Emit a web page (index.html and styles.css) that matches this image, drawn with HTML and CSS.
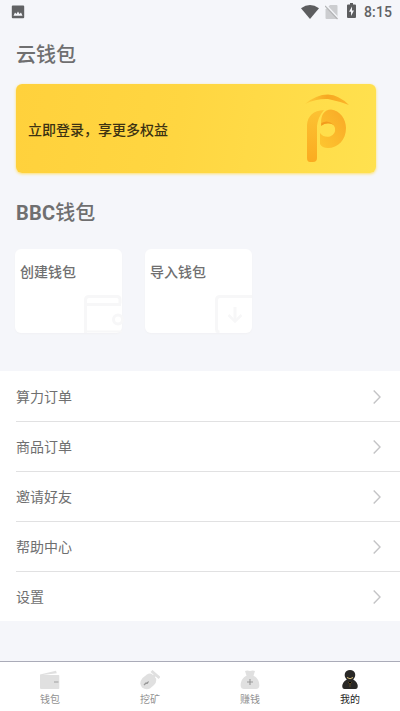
FILE: index.html
```html
<!DOCTYPE html>
<html lang="zh-CN">
<head>
<meta charset="utf-8">
<title>我的</title>
<link rel="stylesheet" href="styles.css">
</head>
<body>
<div class="app">
  <header class="status">
    <svg class="status-photo" width="14" height="14" viewBox="0 0 14 14"><path fill="#616264" fill-rule="evenodd" d="M1.800.500h10.400q1 0 1 1v10.800q0 1-1 1H1.800q-1 0-1-1V1.500q0-1 1-1zM2.500 10.800h9L10 7.500 8.500 9 7 6.500 5.500 9 4 7.500z"/></svg>
    <div class="status-right">
      <svg width="18" height="16" viewBox="0 0 18 16"><path fill="#5c5d5f" d="M0 4.200Q9-2 18 4.200L9 15z"/></svg>
      <svg class="sim" width="13" height="16" viewBox="0 0 13 16"><path fill="#cccdd0" d="M5 1h6.500q1 0 1 1v12q0 1-1 1h-10q-1 0-1-1V5.500z"/><path stroke="#f5f6fa" stroke-width="1.600" d="M1 1l12 13"/><path stroke="#b4b5b7" stroke-width="1.200" d="M0 2l12.500 13"/></svg>
      <svg class="battery" width="9" height="16" viewBox="0 0 9 16"><path fill="#5c5d5f" d="M3 0h3v1.500h2q1 0 1 1V14q0 1-1 1H1q-1 0-1-1V2.500q0-1 1-1h2z"/><path fill="#f5f6fa" d="M5 3.500L2 8.800h2V13l3-5.500H5z"/></svg>
      <span class="clock">8:15</span>
    </div>
  </header>
  <main>
    <h1 class="title">云钱包</h1>
    <section class="banner">
      <span>立即登录，享更多权益</span>
      <svg width="48" height="72" viewBox="0 0 48 72">
        <defs>
          <linearGradient id="arc"><stop offset="0" stop-color="#fdd03c"/><stop offset=".5" stop-color="#f7a821"/><stop offset="1" stop-color="#fbb52a"/></linearGradient>
          <linearGradient id="stem" x2="0" y2="1"><stop offset="0" stop-color="#fcc233"/><stop offset="1" stop-color="#fbab20"/></linearGradient>
          <linearGradient id="bowl" x1="0" y1="1" x2="1" y2="0"><stop offset="0" stop-color="#fdc630"/><stop offset="1" stop-color="#f9a826"/></linearGradient>
        </defs>
        <path fill="url(#arc)" d="M2 11Q13 1.500 25 1.500Q36 2 46 12Q35 8 25 6Q13 5.500 2 11z"/>
        <path fill="url(#stem)" d="M4 32Q5 18 21 17Q15 24 14 33V65q0 4-4 4H7q-3 0-3-4z"/>
        <path fill="url(#bowl)" d="M18 30Q18 17 28 16.500C37 17.500 43 26 43 35C43 47 35 55 25 55Q19 55 17 51V40Q21 45 27 43.500Q33 41 32 35Q30 28 18 32z"/>
        <path fill="#f39b1d" d="M18.500 30Q25 26 31 32Q24 28 18 33z"/>
      </svg>
    </section>
    <h2 class="title title-bbc"><b>BBC</b>钱包</h2>
    <section class="wallets">
      <div class="wallet">创建钱包
        <svg width="40" height="38" viewBox="0 0 40 38" fill="none" stroke="#f7f7f8" stroke-width="3"><path d="M1.500 38V5q0-3.500 3.500-3.500h28q3 0 3 3v4M2 9.500h35"/><path stroke-width="2" d="M1.500 36.500H38"/><circle cx="34" cy="24.500" r="4.500"/></svg>
      </div>
      <div class="wallet">导入钱包
        <svg width="40" height="38" viewBox="0 0 40 38" fill="none" stroke="#f7f7f8" stroke-width="3"><path d="M38 1.500H6Q2.500 1.500 2.500 5v29q0 3 3 3M21 12v14"/><path stroke-width="2.500" d="M14.500 20l6.500 6.500 6.500-6.500"/></svg>
      </div>
    </section>
    <nav class="list">
      <a class="row">算力订单<svg class="chevron" viewBox="0 0 8 14"><path d="M.7.500L7 7 .7 13.500"/></svg></a>
      <a class="row">商品订单<svg class="chevron" viewBox="0 0 8 14"><path d="M.7.500L7 7 .7 13.500"/></svg></a>
      <a class="row">邀请好友<svg class="chevron" viewBox="0 0 8 14"><path d="M.7.500L7 7 .7 13.500"/></svg></a>
      <a class="row">帮助中心<svg class="chevron" viewBox="0 0 8 14"><path d="M.7.500L7 7 .7 13.500"/></svg></a>
      <a class="row">设置<svg class="chevron" viewBox="0 0 8 14"><path d="M.7.500L7 7 .7 13.500"/></svg></a>
    </nav>
  </main>
  <footer class="tabs">
    <a class="tab"><svg width="20" height="20" viewBox="0 0 20 20"><path fill="#e0e0e0" d="M0 4.500L16 .700 16.800 3.200 3 5H18.500q.8 0 .8.800V18.200q0 .8-.8.800H1q-1 0-1-1z"/><path stroke="#aaa" stroke-width="1.200" d="M14 12h4.500"/></svg>钱包</a>
    <a class="tab"><svg width="20" height="20" viewBox="0 0 20 20"><path fill="#e0e0e0" d="M2.500 8L7 4.500Q10 2.500 13 5L16 8.500Q17 12 14 15L10 18.500Q6 20.500 2 17.500Q-1.500 13 2.500 8z"/><path stroke="#e0e0e0" stroke-width="2.800" d="M11.500 1L19.500 8M13 7l3-3"/><path stroke="#999" stroke-width="1.200" d="M4 15l2-2 1.200.300L8.500 11.500"/></svg>挖矿</a>
    <a class="tab"><svg width="20" height="20" viewBox="0 0 20 20"><path fill="#e0e0e0" d="M5 1Q7 0 10 1Q13 0 15 1L13.500 5.800C18 8 19.500 12 19.300 16Q19 19 16 19H4Q1 19 .7 16C.5 12 2 8 6.500 5.800z"/><path stroke="#999" stroke-width="1.100" d="M10 9v6M7 12h6"/></svg>赚钱</a>
    <a class="tab tab-active"><svg width="20" height="20" viewBox="0 0 20 20"><path fill="#292826" d="M6.800 9.500C3 6 4.500 0 10 0S17 6 13.200 9.500Q18 12 17.700 17Q17.500 19 15.500 19H4.500Q2.500 19 2.300 17Q2 12 6.800 9.500z"/><path fill="none" stroke="#dec27a" stroke-width="1" d="M7 7.500Q10 10 13 7.500"/><path stroke="#665126" stroke-width=".8" d="M8 12l2 2 2-2M10 14v3"/></svg>我的</a>
  </footer>
</div>
</body>
</html>
```
FILE: styles.css
```css
* { box-sizing: border-box; }
body {
  margin: 0;
  background: #f5f6fa;
  color: #6f6f70;
  font-family: Roboto, "Noto Sans CJK SC", sans-serif;
}
svg { display: block; flex: none; }
.app { height: 711px; display: flex; flex-direction: column; overflow: hidden; }
main { flex: 1; }
.status {
  height: 24px;
  padding: 0 8px 0 11px;
  display: flex;
  align-items: center;
  justify-content: space-between;
}
.status-right { display: flex; align-items: center; }
.sim { margin-left: 6px; }
.battery { margin: -2px 8px 0 9px; }
.clock { font-size: 14px; line-height: 24px; font-weight: 500; color: #616264; letter-spacing: .1px; }
.title { margin: 0; padding-left: 16px; height: 60px; line-height: 62px; font-size: 20px; font-weight: 500; }
.title b { font-weight: 700; letter-spacing: .2px; }
.banner {
  width: 360px;
  height: 89px;
  margin-left: 16px;
  padding: 0 25px 0 12px;
  display: flex;
  align-items: center;
  justify-content: space-between;
  border-radius: 6px;
  background: linear-gradient(100deg, #ffd13c, #ffd641 45%, #ffe14f);
  box-shadow: 0 1px 3px #ffdf6b;
  color: #3c3212;
  font-size: 14px;
  font-weight: 500;
}
.title-bbc { height: 76px; line-height: 80px; }
.wallets { display: flex; gap: 23px; padding-left: 15px; }
.wallet {
  width: 107px;
  height: 84px;
  padding: 11px 0 0 5px;
  display: flex;
  flex-direction: column;
  justify-content: space-between;
  background: #fff;
  border-radius: 6px;
  box-shadow: 0 1px 2px #f1f1f4;
  font-size: 14px;
  line-height: 24px;
  font-weight: 500;
}
.wallet svg { align-self: flex-end; margin-right: -2px; }
.list { margin-top: 38px; padding: 1px 0 0 16px; background: #fff; }
.row {
  height: 50px;
  padding: 1px 19px 0 0;
  display: flex;
  align-items: center;
  justify-content: space-between;
  border-bottom: 1px solid #e1e1e2;
  font-size: 14px;
  line-height: 20px;
}
.row:last-child { height: 49px; border-color: transparent; }
.chevron { width: 8px; height: 14px; fill: none; stroke: #c4c4c6; stroke-width: 1.4; }
.tabs { height: 50px; display: flex; background: #fff; border-top: 1px solid #aaabb8; }
.tab {
  flex: 1;
  padding-top: 8px;
  display: flex;
  flex-direction: column;
  align-items: center;
  font-size: 10px;
  line-height: 20px;
  color: #929292;
}
.tab-active { color: #242424; }
```
